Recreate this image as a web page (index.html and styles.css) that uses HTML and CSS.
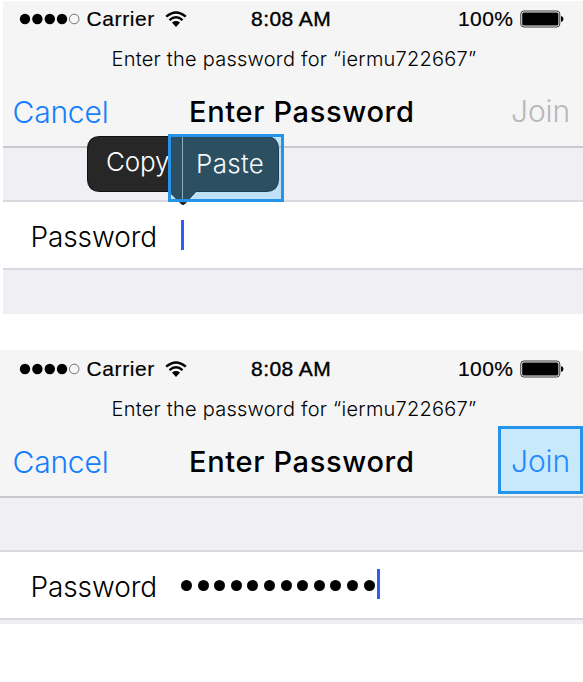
FILE: index.html
```html
<!DOCTYPE html>
<html lang="en">
<head>
<meta charset="utf-8">
<title>Enter Password</title>
<link rel="stylesheet" href="styles.css">
</head>
<body>
<section class="screen screen-first">
  <header class="header">
    <div class="status">
      <svg class="signal" width="62" height="12" viewBox="0 0 62 12"><circle cx="6" cy="6" r="5.2"/><circle cx="18.4" cy="6" r="5.2"/><circle cx="30.8" cy="6" r="5.2"/><circle cx="43" cy="6" r="5.2"/><circle class="empty" cx="55.2" cy="6" r="4.8"/></svg>
      <span class="carrier">Carrier</span>
      <svg class="wifi" width="22" height="17" viewBox="0 0 22 17"><path class="arc" d="M1.2 5.6Q11 -2.8 20.8 5.6M4.5 9.1Q11 3.6 17.5 9.1"/><path d="M7 11.5Q11 8.6 15 11.5L11 16Z"/></svg>
      <span class="time">8:08 AM</span>
      <span class="percent">100%</span>
      <svg class="battery" width="44" height="18" viewBox="0 0 44 18"><rect class="shell" x=".8" y="1" width="39" height="16" rx="3"/><rect x="2.2" y="2.4" width="36.2" height="13.2" rx="1.5"/><path d="M41 6Q43.5 6.5 43.5 9T41 12Z"/></svg>
    </div>
    <p class="prompt">Enter the password for “iermu722667”</p>
    <nav class="nav">
      <span class="cancel">Cancel</span>
      <h1 class="title">Enter Password</h1>
      <span class="join disabled">Join</span>
    </nav>
  </header>
  <div class="field"><span class="label">Password</span><i class="caret"></i></div>
  <div class="menu">
    <svg class="bubble" width="194" height="71" viewBox="0 0 194 71"><path d="M13 .5H179Q191.500 .5 191.500 13V43Q191.500 55.500 179 55.500H109L99 66.500Q96 70.500 93 66.500L82 55.500H13Q.5 55.500 .5 43V13Q.5 .5 13 .5Z"/></svg>
    <span class="copy">Copy</span>
    <div class="highlight"></div>
    <i class="divider"></i>
    <span class="paste">Paste</span>
  </div>
</section>
<section class="screen screen-second">
  <header class="header">
    <div class="status">
      <svg class="signal" width="62" height="12" viewBox="0 0 62 12"><circle cx="6" cy="6" r="5.2"/><circle cx="18.4" cy="6" r="5.2"/><circle cx="30.8" cy="6" r="5.2"/><circle cx="43" cy="6" r="5.2"/><circle class="empty" cx="55.2" cy="6" r="4.8"/></svg>
      <span class="carrier">Carrier</span>
      <svg class="wifi" width="22" height="17" viewBox="0 0 22 17"><path class="arc" d="M1.2 5.6Q11 -2.8 20.8 5.6M4.5 9.1Q11 3.6 17.5 9.1"/><path d="M7 11.5Q11 8.6 15 11.5L11 16Z"/></svg>
      <span class="time">8:08 AM</span>
      <span class="percent">100%</span>
      <svg class="battery" width="44" height="18" viewBox="0 0 44 18"><rect class="shell" x=".8" y="1" width="39" height="16" rx="3"/><rect x="2.2" y="2.4" width="36.2" height="13.2" rx="1.5"/><path d="M41 6Q43.5 6.5 43.5 9T41 12Z"/></svg>
    </div>
    <p class="prompt">Enter the password for “iermu722667”</p>
    <nav class="nav">
      <span class="cancel">Cancel</span>
      <h1 class="title">Enter Password</h1>
      <span class="join active">Join</span>
    </nav>
  </header>
  <div class="field"><span class="label">Password</span><span class="dots"><i></i><i></i><i></i><i></i><i></i><i></i><i></i><i></i><i></i><i></i><i></i><i></i></span><i class="caret"></i></div>
</section>
</body>
</html>
```
FILE: styles.css
```css
* { box-sizing: border-box; }
body {
  margin: 0;
  padding-top: 1px;
  background: #fff;
  color: #000;
  font-family: Inter, "Liberation Sans", sans-serif;
  overflow: hidden;
}
.screen {
  position: relative;
  background: #efeff4;
}
.screen-first { height: 313px; margin-left: 3px; --inset: -3px; }
.screen-second { height: 274px; margin-top: 36px; --inset: 0px; }
.header {
  height: 147px;
  background: #f5f5f5;
  border-bottom: 2px solid #c8c8cd;
}
.screen-second .header { height: 148px; padding-top: 1px; }
.status, .nav, .field { display: flex; align-items: center; white-space: nowrap; }
.status {
  height: 36px;
  margin-left: var(--inset);
  padding-left: 19px;
  font: 21px/36px "Liberation Sans", sans-serif;
}
.status svg { flex: none; }
.signal { margin-right: 5.5px; }
.signal .empty { fill: none; stroke: #444; stroke-width: .7; }
.carrier { width: 79px; letter-spacing: .6px; -webkit-text-stroke: .2px #000; }
.wifi { margin-left: -.5px; }
.wifi .arc { fill: none; stroke: #000; stroke-width: 2.4; }
.time { width: 207px; margin-left: 64px; letter-spacing: .45px; -webkit-text-stroke: .4px #000; }
.percent { width: 61px; letter-spacing: .4px; -webkit-text-stroke: .2px #000; }
.battery { margin-left: 1px; }
.battery .shell { fill: none; stroke: #222; stroke-width: .9; }
.prompt {
  width: 380px;
  margin: 7px 0 0 calc(111.500px + var(--inset));
  font-size: 20px;
  font-weight: 300;
  letter-spacing: .24px;
  line-height: 30px;
  white-space: nowrap;
}
.nav { height: 72px; margin-left: var(--inset); padding: 1px 0 0 12px; font-size: 30px; }
.cancel { width: 177px; padding: 2px 0 0 .5px; color: #157efb; font-weight: 300; letter-spacing: -.2px; }
.title { width: 309px; margin: 0; padding-top: 2px; font-size: 29px; font-weight: 500; letter-spacing: .65px; }
.join { width: 85px; height: 68px; margin-top: -2px; padding-left: 13px; line-height: 71px; font-weight: 300; letter-spacing: -.1px; }
.disabled { color: #b8b8b8; }
.active { background: #c8e9fa; border: 3px solid #2693eb; padding-left: 10px; line-height: 65px; color: #2589ff; }
.field {
  height: 70px;
  margin-top: 52px;
  padding-left: calc(30.500px + var(--inset));
  background: #fff;
  border: solid #d9d9df;
  border-width: 2px 0;
}
.label { width: 149.500px; font-size: 28px; font-weight: 300; letter-spacing: -.1px; padding-top: 4px; }
.caret { width: 3px; height: 30px; background: #315cf6; margin: 0 0 1px 1px; }
.dots { display: flex; gap: 5.6px; margin-left: 1px; }
.dots i { width: 11px; height: 11px; border-radius: 50%; background: #000; }
.dots + .caret { margin: 0 0 2px 2px; }
.menu {
  position: absolute;
  left: 84px;
  top: 135px;
  width: 197px;
  height: 71px;
  color: #fff;
  font-size: 26px;
  font-weight: 300;
}
.bubble { position: absolute; left: 0; top: 0; fill: #272727; stroke: #111; }
.copy, .paste { position: absolute; top: 9px; line-height: 34px; }
.copy { left: 19px; letter-spacing: -.2px; }
.paste { left: 109px; top: 11px; color: #f4fafc; letter-spacing: .3px; }
.highlight {
  position: absolute;
  left: 81px;
  top: -2px;
  width: 116px;
  height: 68px;
  background: rgba(60, 190, 255, .27);
  border: 3px solid #2693eb;
}
.divider { position: absolute; left: 95px; top: 1px; width: 1px; height: 62px; background: #91abb8; }
```
